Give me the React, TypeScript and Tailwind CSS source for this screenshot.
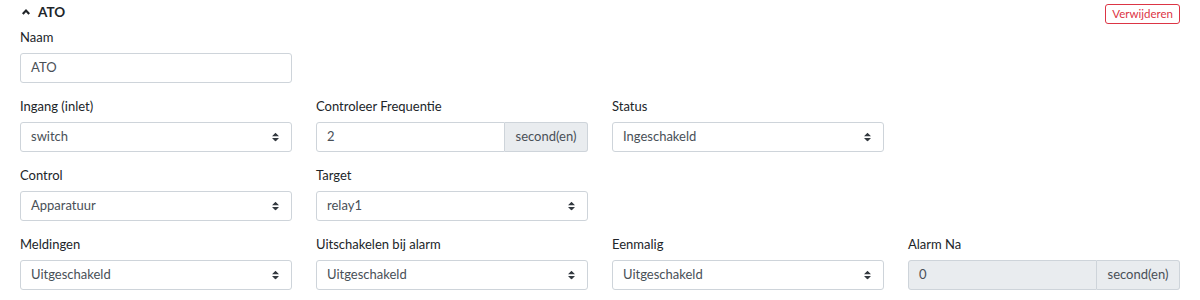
import React from "react";

const SelectArrows = () => (
  <svg width="7" height="9" viewBox="0 0 4 5" className="absolute right-[12px] top-1/2 -translate-y-1/2">
    <path fill="#343a40" d="M2 0L0 2h4zm0 5L0 3h4z" />
  </svg>
);

const Label: React.FC<{ children: React.ReactNode }> = ({ children }) => (
  <div className="h-5 leading-5 mb-[6px] text-[13px] text-[#212529]">{children}</div>
);

const Select: React.FC<{ value: string }> = ({ value }) => (
  <div className="relative h-[30px] border border-[#ced4da] rounded-[3px] bg-white flex items-center pl-[10px] text-[13px] text-[#495057]">
    {value}
    <SelectArrows />
  </div>
);

const TextInput: React.FC<{ value: string; disabled?: boolean; addon?: string }> = ({ value, disabled, addon }) => (
  <div className="flex h-[30px] text-[13px] text-[#495057]">
    <div
      className={
        "flex-1 flex items-center pl-[10px] border border-[#ced4da] " +
        (addon ? "rounded-l-[3px] " : "rounded-[3px] ") +
        (disabled ? "bg-[#e9ecef]" : "bg-white")
      }
    >
      {value}
    </div>
    {addon && (
      <div className="w-[83px] flex items-center justify-center border border-l-0 border-[#ced4da] rounded-r-[3px] bg-[#e9ecef]">
        {addon}
      </div>
    )}
  </div>
);

const Field: React.FC<{ label: string; children: React.ReactNode }> = ({ label, children }) => (
  <div>
    <Label>{label}</Label>
    {children}
  </div>
);

export default function App() {
  return (
    <div className="w-[1200px] h-[300px] bg-white px-5 overflow-hidden" style={{ fontFamily: "Lato, sans-serif" }}>
      <div className="h-[27px] flex justify-between items-start">
        <div className="flex items-center gap-[7px] mt-[2px] h-5 pl-[1px]">
          <svg width="10" height="8" viewBox="0 0 10 8">
            <path d="M1.8 6L5 2.6L8.2 6" fill="none" stroke="#212529" strokeWidth="2.2" />
          </svg>
          <span className="text-[13.5px] font-bold text-[#212529] leading-5">ATO</span>
        </div>
        <button className="mt-[4px] h-[20px] px-[6px] border border-[#dc3545] rounded-[3px] text-[11.5px] text-[#dc3545] leading-none bg-white">
          Verwijderen
        </button>
      </div>

      <div className="grid grid-cols-4 gap-x-6 gap-y-[13px]">
        <Field label="Naam">
          <TextInput value="ATO" />
        </Field>
        <div className="col-span-3" />

        <Field label="Ingang (inlet)">
          <Select value="switch" />
        </Field>
        <Field label="Controleer Frequentie">
          <TextInput value="2" addon="second(en)" />
        </Field>
        <Field label="Status">
          <Select value="Ingeschakeld" />
        </Field>
        <div />

        <Field label="Control">
          <Select value="Apparatuur" />
        </Field>
        <Field label="Target">
          <Select value="relay1" />
        </Field>
        <div />
        <div />

        <Field label="Meldingen">
          <Select value="Uitgeschakeld" />
        </Field>
        <Field label="Uitschakelen bij alarm">
          <Select value="Uitgeschakeld" />
        </Field>
        <Field label="Eenmalig">
          <Select value="Uitgeschakeld" />
        </Field>
        <Field label="Alarm Na">
          <TextInput value="0" disabled addon="second(en)" />
        </Field>
      </div>
    </div>
  );
}
